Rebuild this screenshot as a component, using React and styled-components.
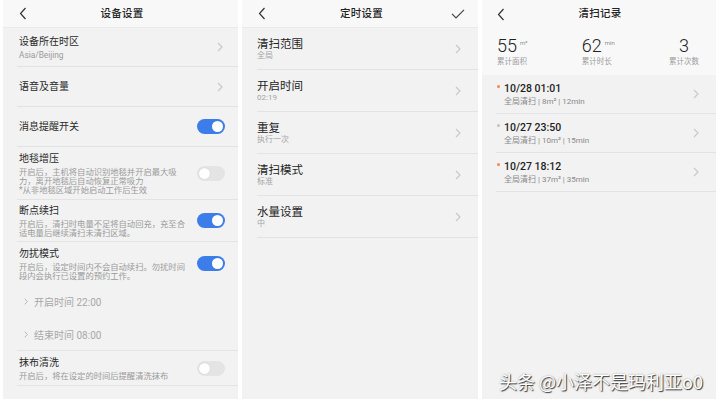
import styled, { createGlobalStyle } from 'styled-components';

const GlobalStyle = createGlobalStyle`
  html, body {
    margin: 0;
    padding: 0;
    background: #fff;
  }
  body {
    font-family: Roboto, "Noto Sans CJK SC", sans-serif;
    -webkit-font-smoothing: antialiased;
  }
`;

const Screen = styled.div`
  position: relative;
  display: flex;
  gap: 4px;
  width: 720px;
  height: 406px;
  padding-left: 3px;
  box-sizing: border-box;
`;

const Phone = styled.div`
  width: ${(p) => p.$w}px;
  height: 399px;
  background: #f2f2f2;
  display: flex;
  flex-direction: column;
  overflow: hidden;
`;

const TopBar = styled.div`
  height: 28px;
  flex-shrink: 0;
  display: grid;
  grid-template-columns: 1fr auto 1fr;
  align-items: center;
  padding: 0 13px 0 ${(p) => p.$left || 16}px;
  background: #f8f8f8;
  box-sizing: border-box;
  border-bottom: ${(p) => (p.$flat ? 'none' : '1px solid #eaeaea')};
`;

const BarTitle = styled.div`
  font-size: 10.5px;
  font-weight: 500;
  color: #222;
  line-height: 14px;
  letter-spacing: 0.2px;
`;

const BarRight = styled.div`
  justify-self: end;
  display: flex;
`;

const Row = styled.div`
  height: ${(p) => p.$h}px;
  flex-shrink: 0;
  margin-left: 14px;
  padding: 0 13px 0 2px;
  display: flex;
  align-items: center;
  justify-content: space-between;
  box-sizing: border-box;
  border-bottom: ${(p) => (p.$noLine ? 'none' : '1px solid #e3e3e3')};
`;

const Texts = styled.div`
  display: flex;
  flex-direction: column;
`;

const RowTitle = styled.div`
  font-size: 10px;
  line-height: 13px;
  color: #2a2a2a;
`;

const RowSub = styled.div`
  font-size: 8.3px;
  line-height: ${(p) => (p.$tight ? 9 : 10)}px;
  margin-top: ${(p) => (p.$tight ? 3 : 2)}px;
  color: #9a9a9a;
  white-space: nowrap;
`;

const SubOption = styled.div`
  display: flex;
  align-items: center;
  gap: 6px;
  padding-left: 5px;
  font-size: 10px;
  color: #a8a8a8;
`;

const ChevronBox = styled.div`
  display: flex;
  margin-right: ${(p) => p.$mr || 0}px;
`;

const Toggle = styled.div`
  position: relative;
  width: 28px;
  height: 15px;
  border-radius: 8px;
  background: ${(p) => (p.$on ? '#3c7de9' : '#e4e4e4')};
  &::after {
    content: '';
    position: absolute;
    top: 2px;
    left: ${(p) => (p.$on ? '15px' : '2px')};
    width: 11px;
    height: 11px;
    border-radius: 50%;
    background: #fff;
    box-shadow: ${(p) => (p.$on ? 'none' : '0 0 1px rgba(0,0,0,0.2)')};
  }
`;

/* middle */
const TimerRow = styled.div`
  height: 42px;
  flex-shrink: 0;
  margin-left: 15px;
  padding-right: 17px;
  display: flex;
  align-items: center;
  justify-content: space-between;
  box-sizing: border-box;
  border-bottom: 1px solid #e3e3e3;
`;

const TimerTitle = styled.div`
  font-size: 11.5px;
  line-height: 14px;
  color: #1e1e1e;
`;

const TimerSub = styled.div`
  font-size: 8px;
  line-height: 10px;
  color: #a5a5a5;
`;

/* right */
const Stats = styled.div`
  height: 47px;
  flex-shrink: 0;
  background: #f8f8f8;
  display: flex;
  justify-content: space-between;
  align-items: flex-start;
  padding: 8px 17px 0 15px;
  box-sizing: border-box;
`;

const Stat = styled.div`
  display: flex;
  flex-direction: column;
  align-items: ${(p) => (p.$center ? 'center' : 'flex-start')};
`;

const StatValue = styled.div`
  display: flex;
  align-items: flex-start;
  font-size: 18px;
  font-weight: 300;
  line-height: 20px;
  color: #222;
`;

const StatUnit = styled.span`
  font-size: 6px;
  line-height: 8px;
  margin: 3px 0 0 3px;
  color: #555;
`;

const StatLabel = styled.div`
  font-size: 7.5px;
  line-height: 10px;
  margin-top: 1px;
  color: #9c9c9c;
`;

const RecordRow = styled.div`
  height: 39px;
  flex-shrink: 0;
  margin-left: 14px;
  padding: 0 17px 0 1px;
  display: grid;
  grid-template-columns: 7px 1fr auto;
  grid-template-rows: auto auto;
  align-content: center;
  align-items: center;
  box-sizing: border-box;
  border-bottom: 1px solid #e3e3e3;
`;

const Dot = styled.span`
  grid-row: 1;
  grid-column: 1;
  align-self: start;
  margin-top: 3px;
  width: 3px;
  height: 3px;
  border-radius: 50%;
  background: ${(p) => (p.$hot ? '#f2884e' : '#c2c2c2')};
`;

const RecordDate = styled.div`
  grid-row: 1;
  grid-column: 2;
  font-size: 10.5px;
  font-weight: 500;
  line-height: 13px;
  color: #1e1e1e;
`;

const RecordMeta = styled.div`
  grid-row: 2;
  grid-column: 2;
  margin-top: 2px;
  font-size: 8px;
  line-height: 10px;
  color: #888;
`;

const RecordChevron = styled.div`
  grid-row: 1 / 3;
  grid-column: 3;
  display: flex;
`;

const Watermark = styled.div`
  position: absolute;
  left: 499px;
  top: 369px;
  font-family: "Noto Sans CJK SC", sans-serif;
  font-size: 18px;
  line-height: 24px;
  color: #fff;
  white-space: nowrap;
  text-shadow: 1px 1px 1px rgba(0, 0, 0, 0.75), 0 0 2px rgba(0, 0, 0, 0.35);
`;

const Back = () => (
  <svg width="8" height="13" viewBox="0 0 8 13">
    <path d="M6.5 1L1.5 6.5 6.5 12" fill="none" stroke="#333" strokeWidth="1.2" />
  </svg>
);

const Check = () => (
  <svg width="14" height="10" viewBox="0 0 14 10">
    <path d="M1 4.8l4 4 8-8" fill="none" stroke="#444" strokeWidth="1.2" />
  </svg>
);

const Chevron = ({ small, color = '#c9c9c9' }) =>
  small ? (
    <svg width="4" height="7" viewBox="0 0 4 7">
      <path d="M0.7 0.7l2.7 2.8-2.7 2.8" fill="none" stroke={color} strokeWidth="1" />
    </svg>
  ) : (
    <svg width="6" height="10" viewBox="0 0 6 10">
      <path d="M1 1l4 4-4 4" fill="none" stroke={color} strokeWidth="1.2" />
    </svg>
  );

const timers = [
  { title: '清扫范围', sub: '全局' },
  { title: '开启时间', sub: '02:19' },
  { title: '重复', sub: '执行一次' },
  { title: '清扫模式', sub: '标准' },
  { title: '水量设置', sub: '中' },
];

const records = [
  { date: '10/28 01:01', meta: '全局清扫 | 8m² | 12min', hot: true },
  { date: '10/27 23:50', meta: '全局清扫 | 10m² | 15min', hot: false },
  { date: '10/27 18:12', meta: '全局清扫 | 37m² | 35min', hot: true },
];

const DeviceSettings = () => (
  <Phone $w={235}>
    <TopBar>
      <Back />
      <BarTitle>设备设置</BarTitle>
      <BarRight />
    </TopBar>
    <Row $h={39}>
      <Texts>
        <RowTitle>设备所在时区</RowTitle>
        <RowSub>Asia/Beijing</RowSub>
      </Texts>
      <ChevronBox $mr={2}><Chevron /></ChevronBox>
    </Row>
    <Row $h={40}>
      <RowTitle>语音及音量</RowTitle>
      <ChevronBox $mr={2}><Chevron /></ChevronBox>
    </Row>
    <Row $h={40}>
      <RowTitle>消息提醒开关</RowTitle>
      <Toggle $on />
    </Row>
    <Row $h={53}>
      <Texts>
        <RowTitle>地毯增压</RowTitle>
        <RowSub $tight>
          开启后，主机将自动识别地毯并开启最大吸<br />
          力，离开地毯后自动恢复正常吸力<br />
          *从非地毯区域开始启动工作后生效
        </RowSub>
      </Texts>
      <Toggle />
    </Row>
    <Row $h={42}>
      <Texts>
        <RowTitle>断点续扫</RowTitle>
        <RowSub $tight>
          开启后，清扫时电量不足将自动回充，充至合<br />
          适电量后继续清扫未清扫区域。
        </RowSub>
      </Texts>
      <Toggle $on />
    </Row>
    <Row $h={43} $noLine>
      <Texts>
        <RowTitle>勿扰模式</RowTitle>
        <RowSub $tight>
          开启后，设定时间内不会自动续扫。勿扰时间<br />
          段内会执行已设置的预约工作。
        </RowSub>
      </Texts>
      <Toggle $on />
    </Row>
    <Row $h={33} $noLine>
      <SubOption>
        <Chevron small color="#b8b8b8" />
        开启时间 22:00
      </SubOption>
    </Row>
    <Row $h={33}>
      <SubOption>
        <Chevron small color="#b8b8b8" />
        结束时间 08:00
      </SubOption>
    </Row>
    <Row $h={35}>
      <Texts>
        <RowTitle>抹布清洗</RowTitle>
        <RowSub $tight>开启后，将在设定的时间后提醒清洗抹布</RowSub>
      </Texts>
      <Toggle />
    </Row>
  </Phone>
);

const TimerSettings = () => (
  <Phone $w={236}>
    <TopBar>
      <Back />
      <BarTitle>定时设置</BarTitle>
      <BarRight>
        <Check />
      </BarRight>
    </TopBar>
    {timers.map((t) => (
      <TimerRow key={t.title}>
        <Texts>
          <TimerTitle>{t.title}</TimerTitle>
          <TimerSub>{t.sub}</TimerSub>
        </Texts>
        <Chevron />
      </TimerRow>
    ))}
  </Phone>
);

const CleanRecords = () => (
  <Phone $w={234}>
    <TopBar $flat $left={15}>
      <Back />
      <BarTitle>清扫记录</BarTitle>
      <BarRight />
    </TopBar>
    <Stats>
      <Stat>
        <StatValue>
          55<StatUnit>m²</StatUnit>
        </StatValue>
        <StatLabel>累计面积</StatLabel>
      </Stat>
      <Stat>
        <StatValue>
          62<StatUnit>min</StatUnit>
        </StatValue>
        <StatLabel>累计时长</StatLabel>
      </Stat>
      <Stat $center>
        <StatValue>3</StatValue>
        <StatLabel>累计次数</StatLabel>
      </Stat>
    </Stats>
    {records.map((r) => (
      <RecordRow key={r.date}>
        <Dot $hot={r.hot} />
        <RecordDate>{r.date}</RecordDate>
        <RecordMeta>{r.meta}</RecordMeta>
        <RecordChevron>
          <Chevron />
        </RecordChevron>
      </RecordRow>
    ))}
  </Phone>
);

const App = () => (
  <>
    <GlobalStyle />
    <Screen>
      <DeviceSettings />
      <TimerSettings />
      <CleanRecords />
      <Watermark>头条 @小泽不是玛利亚o0</Watermark>
    </Screen>
  </>
);

export default App;
